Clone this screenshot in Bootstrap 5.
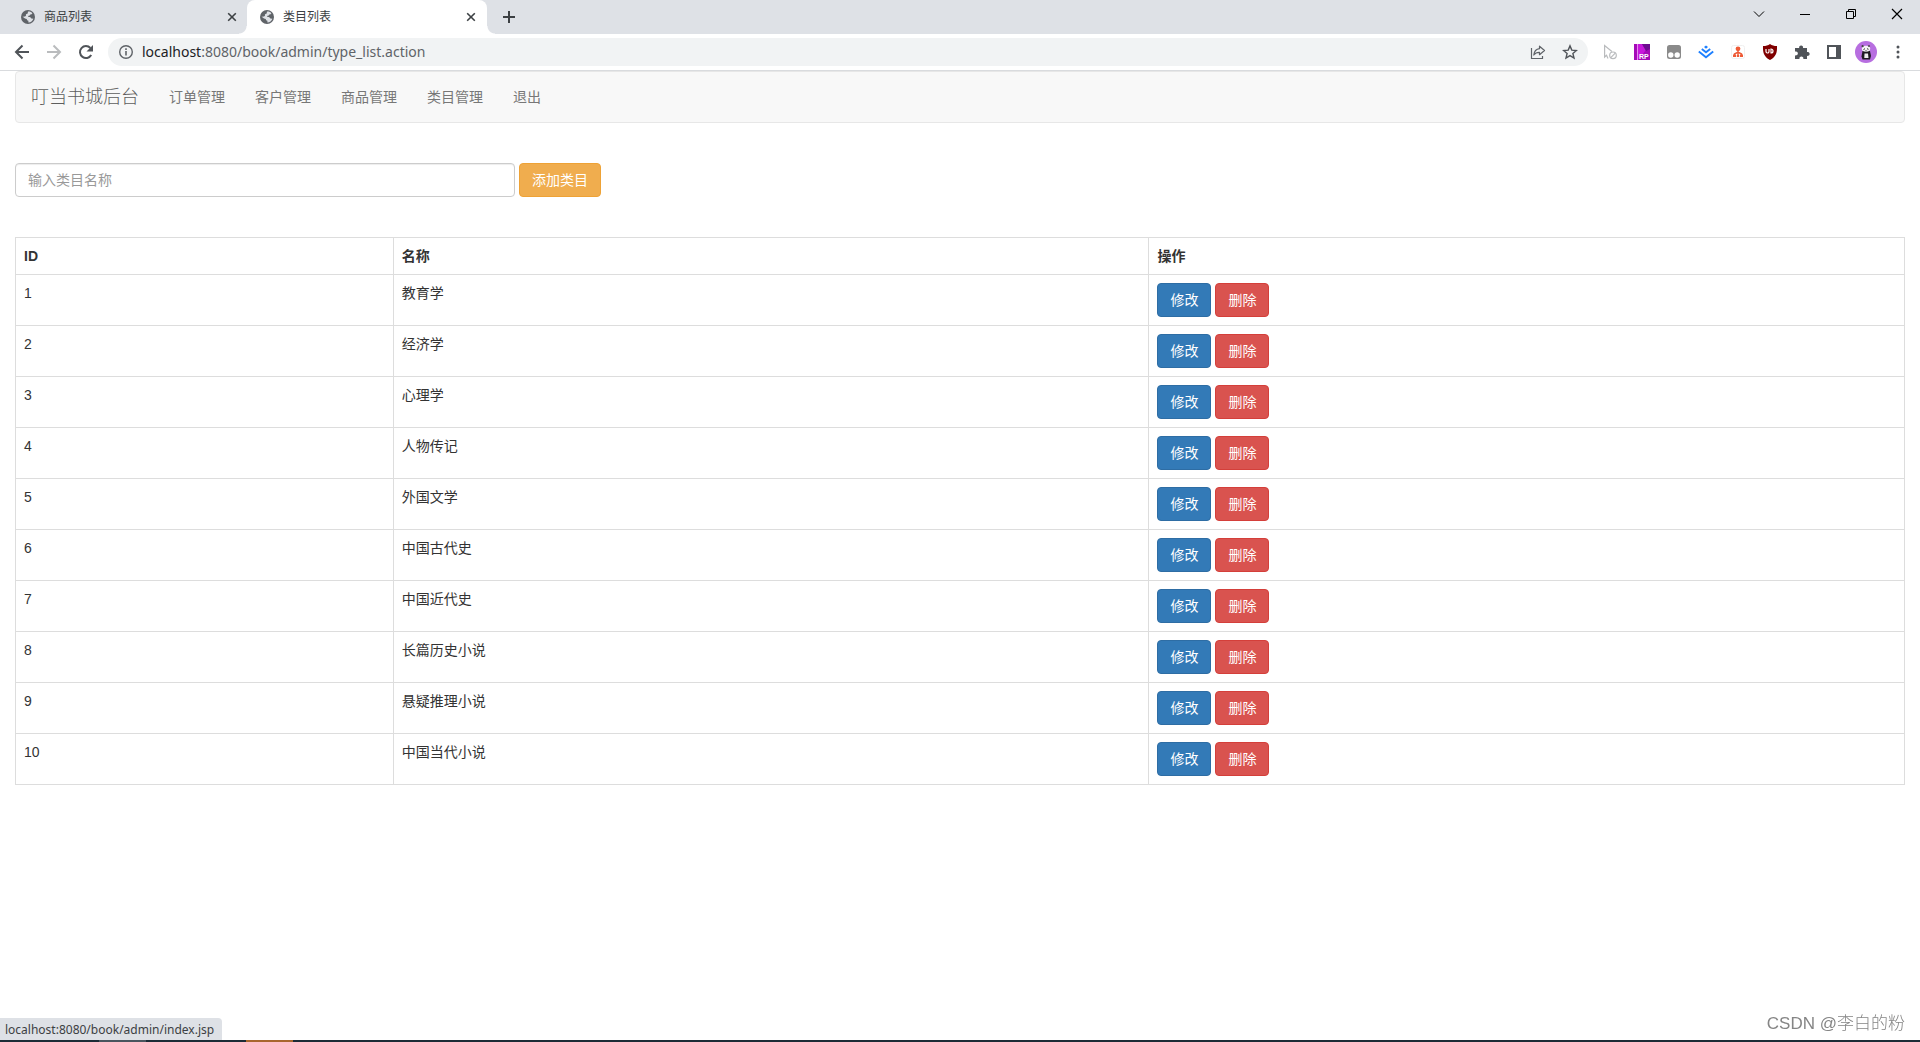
<!DOCTYPE html>
<html lang="zh-CN">
<head>
<meta charset="utf-8">
<meta name="viewport" content="width=device-width, initial-scale=1">
<title>类目列表</title>
<link href="https://cdn.jsdelivr.net/npm/bootstrap@5.3.0/dist/css/bootstrap.min.css" rel="stylesheet">
<style>
  body { font-family: "Liberation Sans", "Noto Sans CJK SC", sans-serif; font-size: 14px; line-height: 20px; color: #333; background: #fff; }
  svg { display: block; flex: none; }
  .plain-btn { border: 0; background: none; padding: 0; color: inherit; display: flex; align-items: center; justify-content: center; flex: none; }

  /* browser frame */
  .tab-strip { height: 34px; background: #dee1e6; color: #3c4043; font-family: "Noto Sans", "Noto Sans CJK SC", sans-serif; }
  .browser-tab { height: 34px; width: 240px; font-size: 12px; padding: 0 8px 0 12px; gap: 8px; color: #3c4043; }
  .first-tab { width: 247px; padding: 0 7px 0 20px; }
  .current-tab { position: relative; background: #fff; border-radius: 8px 8px 0 0; }
  .current-tab::before, .current-tab::after { content: ""; position: absolute; bottom: 0; width: 8px; height: 8px; }
  .current-tab::before { left: -8px; background: radial-gradient(circle at 0 0, transparent 7px, #fff 8px); }
  .current-tab::after { right: -8px; background: radial-gradient(circle at 100% 0, transparent 7px, #fff 8px); }
  .browser-tab .plain-btn { width: 16px; height: 16px; }
  .new-tab { width: 28px; height: 34px; margin-left: 8px; }
  .win-btn { width: 46px; height: 28px; color: #000; }
  .tool-bar { height: 37px; background: #fff; border-bottom: 1px solid #d9dbde; color: #5f6368; padding: 0 6px; }
  .tool-bar .plain-btn { width: 32px; height: 32px; }
  .address-box { height: 28px; border-radius: 14px; background: #f1f3f4; margin: 0 6px; padding: 0 2px 0 10px; }
  .address-text { font-family: "Noto Sans", sans-serif; font-size: 14px; color: #5f6368; margin-left: 8px; }
  .address-text span { color: #202124; }

  /* admin page */
  .page-body { padding: 0 15px; }
  .admin-nav { --bs-navbar-padding-y: 0; background: #f8f8f8; border: 1px solid #e7e7e7; border-radius: 4px; min-height: 52px; margin-bottom: 40px; padding: 0; }
  .admin-nav .navbar-brand { font-size: 18px; line-height: 20px; padding: 15px; margin: 0; color: #5e5e5e; font-weight: 300; }
  .admin-nav .nav-link { line-height: 20px; padding: 15px !important; color: #777; }
  .add-form { margin-bottom: 40px; gap: 4px; }
  .type-input { width: 500px; height: 34px; font-size: 14px; line-height: 20px; padding: 6px 12px; border: 1px solid #ccc; border-radius: 4px; box-shadow: inset 0 1px 1px rgba(0,0,0,.075); }
  .type-input::placeholder { color: #999; }
  .btn { --bs-btn-padding-y: 6px; --bs-btn-padding-x: 12px; --bs-btn-font-size: 14px; --bs-btn-line-height: 20px; --bs-btn-border-radius: 4px; }
  .btn-primary { --bs-btn-bg: #337ab7; --bs-btn-border-color: #2e6da4; }
  .btn-danger { --bs-btn-bg: #d9534f; --bs-btn-border-color: #d43f3a; }
  .btn-warning { --bs-btn-color: #fff; --bs-btn-bg: #f0ad4e; --bs-btn-border-color: #eea236; }
  .type-table { --bs-table-color: #333; table-layout: fixed; border-color: #ddd; color: #333; vertical-align: top; }
  .type-table > :not(caption) > * > * { padding: 8px; }
  .type-table > tbody { border-top: 0; }

  /* overlays and desktop edge */
  .status-bubble { position: fixed; left: 0; bottom: 2px; height: 22px; padding: 2px 8px 0 5px; background: #dee1e6; border-radius: 0 4px 0 0; font-family: "Noto Sans", sans-serif; font-size: 12px; color: #3c4043; }
  .author-tag { position: fixed; right: 15px; bottom: 8px; font-size: 17px; color: #858585; font-weight: 300; }
  .task-edge { height: 2px; background: #1c2b36; padding-left: 99px; gap: 100px; }
  .task-edge span { width: 47px; height: 2px; background: #4a555e; }
  .task-edge span + span { background: #a9662e; }
</style>
<script src="https://cdn.jsdelivr.net/npm/bootstrap@5.3.0/dist/js/bootstrap.bundle.min.js"></script>
</head>
<body class="d-flex flex-column min-vh-100">

<svg width="0" height="0" class="position-absolute" aria-hidden="true">
  <symbol id="globe" viewBox="0 0 16 16">
    <circle cx="8" cy="8" r="7" fill="#5f6368"/>
    <path d="M8 2.600C9.800 2.300 11.300 3 12.400 4.300c-.4.900-1.200 1.200-2.200 1.200-.1 1-.8 1.300-1.800 1.300L8.200 8c1.600-.2 3 .2 3.100 1.600l2.100.1c-.8 2.300-2.600 3.600-5 3.800v-1.700c-1.100 0-1.600-.7-1.600-1.700C5.200 9.800 4 8.900 2.600 7.600c1.300.1 2.500 0 3.300-.6V5.800C6 4.900 6.900 4.700 7.700 4.500z" fill="#dee1e6"/>
  </symbol>
  <symbol id="cross" viewBox="0 0 16 16"><path d="M4.200 4.200l7.600 7.600M11.800 4.200l-7.600 7.600" stroke="#3c4043" stroke-width="1.600" fill="none"/></symbol>
</svg>

<header>
  <div class="tab-strip d-flex align-items-start">
    <div class="browser-tab first-tab d-flex align-items-center">
      <svg width="16" height="16"><use href="#globe"/></svg>
      <span class="flex-grow-1">商品列表</span>
      <button class="plain-btn" aria-label="关闭标签页"><svg width="16" height="16"><use href="#cross"/></svg></button>
    </div>
    <div class="browser-tab current-tab d-flex align-items-center">
      <svg width="16" height="16"><use href="#globe"/></svg>
      <span class="flex-grow-1">类目列表</span>
      <button class="plain-btn" aria-label="关闭标签页"><svg width="16" height="16"><use href="#cross"/></svg></button>
    </div>
    <button class="plain-btn new-tab me-auto" aria-label="新标签页"><svg width="14" height="14"><path d="M7 1v12M1 7h12" stroke="#3c4043" stroke-width="2"/></svg></button>
    <button class="plain-btn win-btn" aria-label="搜索标签页"><svg width="12" height="12" fill="none" stroke="currentColor"><path d="M1 3.500l5 5 5-5"/></svg></button>
    <button class="plain-btn win-btn" aria-label="最小化"><svg width="12" height="12" fill="none" stroke="currentColor"><path d="M1 6.500h10"/></svg></button>
    <button class="plain-btn win-btn" aria-label="还原"><svg width="12" height="12" fill="none" stroke="currentColor"><path d="M1.500 3.500h7v7h-7zM3.500 3.500v-2h7v7h-2"/></svg></button>
    <button class="plain-btn win-btn" aria-label="关闭"><svg width="12" height="12" fill="none" stroke="currentColor" stroke-width="1.200"><path d="M1 1l10 10M11 1L1 11"/></svg></button>
  </div>

  <div class="tool-bar d-flex align-items-center">
    <button class="plain-btn" aria-label="后退"><svg width="16" height="16" fill="none" stroke="#505459" stroke-width="2"><path d="M15 8H2.500M8.500 1.500L2 8l6.500 6.500"/></svg></button>
    <button class="plain-btn" aria-label="前进"><svg width="16" height="16" fill="none" stroke="#babcbe" stroke-width="2"><path d="M1 8h12.500M7.500 1.500L14 8l-6.500 6.500"/></svg></button>
    <button class="plain-btn" aria-label="刷新"><svg width="16" height="16"><path d="M13.200 11A6 6 0 1 1 12.400 4" fill="none" stroke="#505459" stroke-width="2"/><path d="M15 1v6.500H8.500z" fill="#505459"/></svg></button>
    <div class="address-box d-flex align-items-center flex-grow-1">
      <svg width="16" height="16"><circle cx="8" cy="8" r="6.300" fill="none" stroke="#5f6368" stroke-width="1.400"/><path d="M8 7v4.500M8 4.300V6" stroke="#5f6368" stroke-width="1.600"/></svg>
      <div class="address-text flex-grow-1"><span>localhost</span>:8080/book/admin/type_list.action</div>
      <button class="plain-btn" aria-label="分享"><svg width="16" height="16" fill="none" stroke="#5f6368" stroke-width="1.200"><path d="M1.500 4v10.500h11V12"/><path d="M9.500 2.200l5 4.300-5 4.200V8.300C7 8.200 5.200 9 3.800 11 4.200 7.500 6.200 5.200 9.500 4.700z" stroke-linejoin="round"/></svg></button>
      <button class="plain-btn" aria-label="收藏"><svg width="16" height="16" fill="none" stroke="#505459" stroke-width="1.400"><path d="M8 1.900l1.800 4.200 4.600.4-3.500 3 1.100 4.500L8 11.600 4 14l1.100-4.500-3.500-3 4.600-.4z"/></svg></button>
    </div>
    <button class="plain-btn" aria-label="选择工具"><svg width="16" height="16" fill="none" stroke="#b9bbbd" stroke-width="1.200"><path d="M6 14.500l-1.500-3.300L2.600 13V1.500l7.300 6"/><circle cx="11" cy="11.300" r="3.300"/><path d="M8.800 13.600l4.400-4.500"/></svg></button>
    <button class="plain-btn" aria-label="RP"><svg width="16" height="16"><path fill="#a50bb8" d="M0 0h16v16H0z"/><path fill="#c818dc" d="M4 0h4l4 6-8 10z"/><path fill="#6d0c90" d="M8 0h8v5l-4 2z"/><path fill="#e58cf0" d="M3 0h1v16H3z"/><text x="5" y="14.500" font-size="7" font-weight="700" fill="#fff" font-family="Liberation Sans, sans-serif">RP</text></svg></button>
    <button class="plain-btn" aria-label="脚本管理"><svg width="16" height="16"><rect x="1" y="1" width="14" height="14" rx="2.500" fill="#8a8a8a"/><circle cx="4.800" cy="11" r="2.700" fill="#fff"/><circle cx="11.200" cy="11" r="2.700" fill="#fff"/></svg></button>
    <button class="plain-btn" aria-label="掘金"><svg width="16" height="16"><path d="M8 1.500l2 1.600-2 1.600-2-1.600z" fill="#1e80ff"/><path d="M3.800 5L8 8.300 12.200 5M.8 7.500L8 13.200l7.200-5.700" stroke="#1e80ff" stroke-width="1.900" fill="none"/></svg></button>
    <button class="plain-btn" aria-label="站点结构"><svg width="16" height="16"><rect x="1.500" y="1.500" width="13" height="13" rx="2" fill="#fff" stroke="#f0f0f0"/><circle cx="8" cy="4.800" r="2.400" fill="#ee5a36"/><path d="M8 6v7M4.500 12V10L8 8l3.500 2v2" fill="none" stroke="#ee5a36" stroke-width="1.500"/><path d="M3 10.500h3V13H3zM6.800 11h2.400v2H6.800zM10 10.500h3V13h-3z" fill="#ee5a36"/></svg></button>
    <button class="plain-btn" aria-label="uBlock"><svg width="16" height="16"><path d="M8 0c2 1.500 4 2 7 2 .2 6-.5 10.500-7 14C1.500 12.500.8 8 1 2c3 0 5-.5 7-2z" fill="#800000"/><path d="M4 5v2.500a1.500 1.500 0 0 0 3 0V5M9 5v4a2 2 0 1 0 0-4z" fill="none" stroke="#fff" stroke-width="1.200"/></svg></button>
    <button class="plain-btn" aria-label="扩展程序"><svg width="16" height="16"><path d="M1 4h4.200a2 2 0 1 1 3.800 0h4v4a2 2 0 1 1 0 3.800V15H9.300a2 2 0 1 0-3.800 0H1v-3.800a2 2 0 1 0 0-3.600z" fill="#505459"/></svg></button>
    <button class="plain-btn" aria-label="侧边栏"><svg width="16" height="16"><path d="M1 1h14v14H1zM3 3v10h7V3z" fill="#505459" fill-rule="evenodd"/></svg></button>
    <button class="plain-btn" aria-label="个人资料"><svg width="22" height="22"><circle cx="11" cy="11" r="11" fill="#b76ee0"/><path d="M7.500 10h7.500l1 5-1 3.500H7.500l-1-3z" fill="#1e1a22"/><path d="M9.500 12.500h3.500l.5 4.500h-4.200z" fill="#eee"/><ellipse cx="11" cy="7.800" rx="4.200" ry="3" fill="#f4f4f4"/><circle cx="7.600" cy="5.200" r="1.100" fill="#444"/><circle cx="14" cy="5" r="1.100" fill="#555"/><path d="M8.500 8.500l1.500-.8M12 7.700l1.500.6M10.500 9.700h1" stroke="#333"/></svg></button>
    <button class="plain-btn" aria-label="菜单"><svg width="16" height="16" fill="#505459"><circle cx="8" cy="3" r="1.500"/><circle cx="8" cy="8" r="1.500"/><circle cx="8" cy="13" r="1.500"/></svg></button>
  </div>
</header>

<main class="page-body flex-grow-1">
  <nav class="navbar navbar-expand admin-nav align-items-start justify-content-start">
    <a class="navbar-brand" href="#">叮当书城后台</a>
    <ul class="navbar-nav">
      <li class="nav-item"><a class="nav-link" href="#">订单管理</a></li>
      <li class="nav-item"><a class="nav-link" href="#">客户管理</a></li>
      <li class="nav-item"><a class="nav-link" href="#">商品管理</a></li>
      <li class="nav-item"><a class="nav-link" href="#">类目管理</a></li>
      <li class="nav-item"><a class="nav-link" href="#">退出</a></li>
    </ul>
  </nav>

  <form class="add-form d-flex">
    <input class="form-control type-input" type="text" id="typeName" aria-label="类目名称" placeholder="输入类目名称">
    <button class="btn btn-warning" type="button">添加类目</button>
  </form>

  <table class="table table-bordered type-table mb-0">
    <colgroup><col style="width:20%"><col style="width:40%"><col style="width:40%"></colgroup>
    <thead><tr><th scope="col">ID</th><th scope="col">名称</th><th scope="col">操作</th></tr></thead>
    <tbody>
      <tr><td>1</td><td>教育学</td><td><div class="d-flex gap-1"><button class="btn btn-primary">修改</button><button class="btn btn-danger">删除</button></div></td></tr>
      <tr><td>2</td><td>经济学</td><td><div class="d-flex gap-1"><button class="btn btn-primary">修改</button><button class="btn btn-danger">删除</button></div></td></tr>
      <tr><td>3</td><td>心理学</td><td><div class="d-flex gap-1"><button class="btn btn-primary">修改</button><button class="btn btn-danger">删除</button></div></td></tr>
      <tr><td>4</td><td>人物传记</td><td><div class="d-flex gap-1"><button class="btn btn-primary">修改</button><button class="btn btn-danger">删除</button></div></td></tr>
      <tr><td>5</td><td>外国文学</td><td><div class="d-flex gap-1"><button class="btn btn-primary">修改</button><button class="btn btn-danger">删除</button></div></td></tr>
      <tr><td>6</td><td>中国古代史</td><td><div class="d-flex gap-1"><button class="btn btn-primary">修改</button><button class="btn btn-danger">删除</button></div></td></tr>
      <tr><td>7</td><td>中国近代史</td><td><div class="d-flex gap-1"><button class="btn btn-primary">修改</button><button class="btn btn-danger">删除</button></div></td></tr>
      <tr><td>8</td><td>长篇历史小说</td><td><div class="d-flex gap-1"><button class="btn btn-primary">修改</button><button class="btn btn-danger">删除</button></div></td></tr>
      <tr><td>9</td><td>悬疑推理小说</td><td><div class="d-flex gap-1"><button class="btn btn-primary">修改</button><button class="btn btn-danger">删除</button></div></td></tr>
      <tr><td>10</td><td>中国当代小说</td><td><div class="d-flex gap-1"><button class="btn btn-primary">修改</button><button class="btn btn-danger">删除</button></div></td></tr>
    </tbody>
  </table>
</main>

<div class="status-bubble">localhost:8080/book/admin/index.jsp</div>
<div class="author-tag">CSDN @李白的粉</div>
<footer class="task-edge d-flex"><span></span><span></span></footer>
</body>
</html>
